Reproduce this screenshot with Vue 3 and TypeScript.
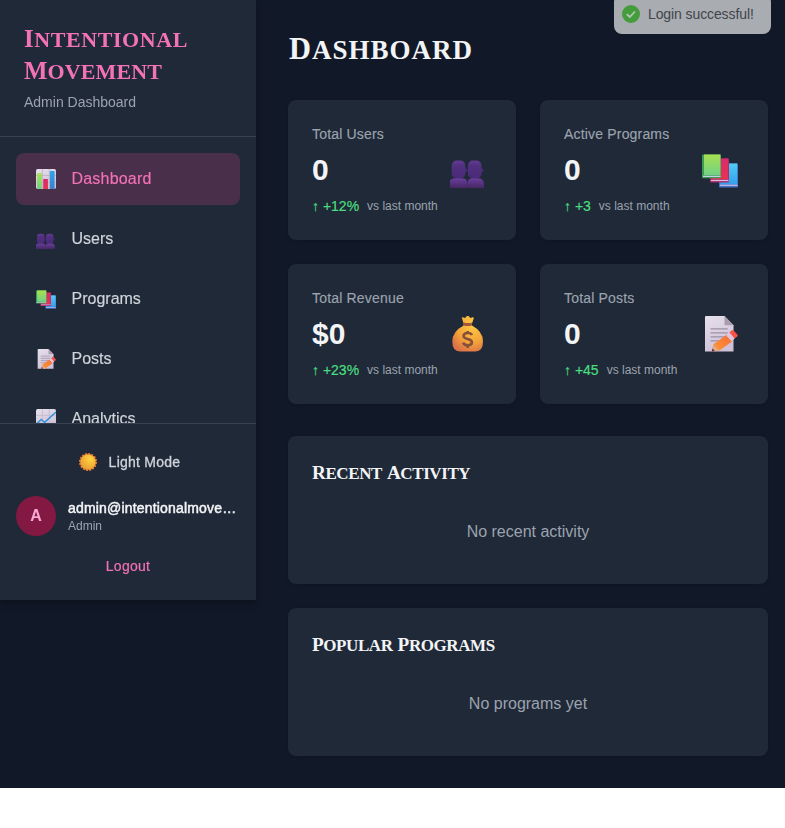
<script setup lang="ts">
interface NavItem { label: string; icon: string; active?: boolean }
interface Stat { label: string; value: string; change: string; icon: string }

const navItems: NavItem[] = [
  { label: 'Dashboard', icon: 'chart', active: true },
  { label: 'Users', icon: 'users' },
  { label: 'Programs', icon: 'books' },
  { label: 'Posts', icon: 'memo' },
  { label: 'Analytics', icon: 'trend' },
]

const stats: Stat[] = [
  { label: 'Total Users', value: '0', change: '↑ +12%', icon: 'users' },
  { label: 'Active Programs', value: '0', change: '↑ +3', icon: 'books' },
  { label: 'Total Revenue', value: '$0', change: '↑ +23%', icon: 'money' },
  { label: 'Total Posts', value: '0', change: '↑ +45', icon: 'memo' },
]

const panels = [
  { title: ['Recent', 'Activity'], empty: 'No recent activity' },
  { title: ['Popular', 'Programs'], empty: 'No programs yet' },
]
</script>

<template>
  <div class="layout">
    <svg class="sprite" width="0" height="0" aria-hidden="true">
      <defs>
        <linearGradient id="g-paper" x1="0" y1="0" x2="0.4" y2="1"><stop offset="0" stop-color="#e6e0ec" /><stop offset="1" stop-color="#cfc1d8" /></linearGradient>
        <linearGradient id="g-green" x1="0" y1="0" x2="0" y2="1"><stop offset="0" stop-color="#a8e050" /><stop offset="1" stop-color="#72d186" /></linearGradient>
        <linearGradient id="g-red" x1="0" y1="0" x2="0" y2="1"><stop offset="0" stop-color="#d92b6d" /><stop offset="1" stop-color="#ea3150" /></linearGradient>
        <linearGradient id="g-sky" x1="0" y1="0" x2="0" y2="1"><stop offset="0" stop-color="#50cdf4" /><stop offset="1" stop-color="#34a0ed" /></linearGradient>
        <linearGradient id="g-blue" x1="0" y1="0" x2="0" y2="1"><stop offset="0" stop-color="#2da4ec" /><stop offset="1" stop-color="#3f7ed0" /></linearGradient>
        <linearGradient id="g-head" x1="0" y1="0" x2="0" y2="1"><stop offset="0" stop-color="#633b91" /><stop offset="0.3" stop-color="#51307f" /><stop offset="1" stop-color="#4a2a78" /></linearGradient>
        <linearGradient id="g-body" x1="0" y1="0" x2="0" y2="1"><stop offset="0" stop-color="#693e9c" /><stop offset="1" stop-color="#452765" /></linearGradient>
        <radialGradient id="g-bag" cx="0.65" cy="0.25" r="0.8"><stop offset="0" stop-color="#ffca45" /><stop offset="0.6" stop-color="#f5a53a" /><stop offset="1" stop-color="#dc7347" /></radialGradient>
        <linearGradient id="g-pencil" x1="0" y1="1" x2="1" y2="0"><stop offset="0" stop-color="#ff9b36" /><stop offset="1" stop-color="#f56d38" /></linearGradient>
        <radialGradient id="g-sun" cx="0.65" cy="0.3" r="0.75"><stop offset="0" stop-color="#ffd43c" /><stop offset="1" stop-color="#e99b36" /></radialGradient>
      </defs>
      <symbol id="chart" viewBox="0 0 36 36">
        <rect width="36" height="36" rx="3" fill="url(#g-paper)" />
        <path d="M0 11.5H36M0 24H36M11.5 0V36M24 0V36" stroke="#b9afc1" stroke-width="1.4" />
        <rect x="2" y="7.5" width="8.5" height="28.5" rx="1" fill="url(#g-green)" />
        <rect x="13" y="18" width="8.5" height="18" rx="1" fill="url(#g-red)" />
        <rect x="25" y="3.8" width="8.5" height="32.2" rx="1" fill="url(#g-blue)" />
      </symbol>
      <symbol id="users" viewBox="0 0 36 36" overflow="visible">
        <circle cx="15.6" cy="18.3" r="1.5" fill="#3f246c" stroke="#58348a" stroke-width=".7" />
        <circle cx="31.6" cy="18.3" r="1.5" fill="#3f246c" stroke="#58348a" stroke-width=".7" />
        <rect x="1.7" y="8.5" width="13.6" height="18" rx="5" fill="url(#g-head)" />
        <rect x="17.9" y="8.5" width="13.6" height="18" rx="5" fill="url(#g-head)" />
        <path d="M-1.2 36V31.5Q-.5 26.3 5 26.3H12Q17.3 26.3 17.8 31.5V36Z" fill="url(#g-body)" />
        <path d="M18 36V28.5Q19.5 26.3 22 26.3H28Q33.5 26.3 34 31.5V36Z" fill="url(#g-body)" />
      </symbol>
      <symbol id="books" viewBox="0 0 36 36">
        <rect x="17" y="11.5" width="19" height="24" rx="1" fill="#4273c9" />
        <rect x="18.5" y="11.5" width="16.7" height="20.5" fill="url(#g-sky)" />
        <rect x="18" y="32.6" width="17.5" height="1.3" fill="#c3c0ea" />
        <rect x="8" y="6.5" width="19" height="24" rx="1" fill="#a82b68" />
        <rect x="10" y="6.5" width="16.2" height="20.5" fill="url(#g-red)" />
        <rect x="9" y="27.8" width="17.5" height="1.3" fill="#dfb6dc" />
        <rect x="0" y="2.5" width="19" height="23.7" rx="1" fill="#3c9b54" />
        <rect x="2" y="2.5" width="16.4" height="20.5" fill="url(#g-green)" />
        <rect x="1" y="23.7" width="17.5" height="1.3" fill="#c3d0df" />
      </symbol>
      <symbol id="money" viewBox="0 0 36 36" overflow="visible">
        <path d="M12 2.6Q11.2 1 13 1.2L15 2 17-.1Q17.8-.5 18.6.1L20.4 2 22.5 1.2Q24.4 1 23.6 2.8L22 7.5V9.5Q33 15.5 33 25.3 33 35.5 25.5 35.5H10Q2.3 35.5 2.3 25.3 2.3 15.5 13.6 9.5V7.5Z" fill="url(#g-bag)" />
        <path d="M13.8 6.4Q17.8 7.4 21.8 6.4L22 9.4Q17.8 10.5 13.6 9.4Z" fill="#a4563b" />
        <path d="M21.9 19.2C20.9 16.2 13.6 16.2 13.6 20 13.6 24 21.9 22 21.9 26.2 21.9 30.4 14 30 13.2 26.6M17.7 15V18M17.7 29V32" fill="none" stroke="#87503b" stroke-width="2.6" />
      </symbol>
      <symbol id="memo" viewBox="0 0 36 36" overflow="visible">
        <path d="M4 0H22.5L31.5 9.3V35.5H3V1Q3 0 4 0Z" fill="url(#g-paper)" />
        <path d="M22.5 0V8Q22.5 9.3 24 9.3H31.5Z" fill="#a99caf" />
        <path d="M8.5 12.8H25.7M8.5 16.8H25.7M8.5 20.8H23M8.5 24.8H18" stroke="#9c91a4" stroke-width="1.2" />
        <path d="M24.5 18.8 30.3 25.2 17.5 34.5 9.6 35.8 11.5 28.3Z" fill="url(#g-pencil)" />
        <path d="M11.5 28.8 17.5 34.5 9.6 35.8Z" fill="#dcab8a" />
        <path d="M10.5 32.5 13 35.2 9.6 35.8Z" fill="#572b51" />
        <path d="M24.2 19.4 27.8 16.2 32.8 22.4 29.5 25.2Z" fill="#dfc6df" />
        <path d="M27.4 16.6 29.5 14.5Q30.5 13.7 31.5 14.5L35.3 18.6Q36.1 19.6 35.2 20.4L32.6 22.6Z" fill="#fa5449" />
      </symbol>
      <symbol id="trend" viewBox="0 0 36 36">
        <rect width="36" height="36" rx="3" fill="url(#g-paper)" />
        <path d="M0 11.5H36M0 24H36M11.5 0V36M24 0V36" stroke="#c3bacb" stroke-width="1.4" />
        <path d="M1 27 9.5 19 15.5 24 36 5.5" fill="none" stroke="#2d91d9" stroke-width="2.6" />
      </symbol>
      <symbol id="sun" viewBox="0 0 36 36">
        <circle cx="18" cy="18" r="14.6" fill="none" stroke="#e87831" stroke-width="3.4" stroke-dasharray="3.4 2.333" />
        <circle cx="18" cy="18" r="14" fill="url(#g-sun)" stroke="#e98a33" stroke-width="1" />
      </symbol>
    </svg>

    <aside class="sidebar">
      <header class="brand">
        <h1 class="brand-title caps"><span>Intentional</span> <span class="second">Movement</span></h1>
        <p class="brand-sub">Admin Dashboard</p>
      </header>
      <nav class="nav">
        <a v-for="item in navItems" :key="item.label" class="nav-item" :class="{ active: item.active }">
          <svg class="nav-icon"><use :href="'#' + item.icon" /></svg>
          <span>{{ item.label }}</span>
        </a>
      </nav>
      <footer class="account">
        <button class="theme">
          <svg class="nav-icon"><use href="#sun" /></svg>
          <span>Light Mode</span>
        </button>
        <div class="user">
          <div class="avatar">A</div>
          <div class="user-text">
            <p class="email">admin@intentionalmovement.com</p>
            <p class="role">Admin</p>
          </div>
        </div>
        <button class="logout">Logout</button>
      </footer>
    </aside>

    <main class="main">
      <h1 class="page-title caps"><span>Dashboard</span></h1>
      <section class="stats">
        <article v-for="s in stats" :key="s.label" class="card stat">
          <div>
            <p class="label">{{ s.label }}</p>
            <p class="value">{{ s.value }}</p>
            <p class="change"><span class="up">{{ s.change }}</span><span class="vs">vs last month</span></p>
          </div>
          <svg class="stat-icon"><use :href="'#' + s.icon" /></svg>
        </article>
      </section>
      <section class="panels">
        <article v-for="p in panels" :key="p.empty" class="card">
          <h2 class="panel-title caps"><span v-for="w in p.title" :key="w">{{ w }}</span></h2>
          <p class="empty">{{ p.empty }}</p>
        </article>
      </section>
    </main>

    <div class="toast">
      <svg width="18" height="18" viewBox="0 0 18 18"><circle cx="9" cy="9" r="9" fill="#459c3b" /><path d="M4.8 9.2 7.8 12 13 6.5" fill="none" stroke="#b5c5b5" stroke-width="1.8" /></svg>
      <span>Login successful!</span>
    </div>
  </div>
</template>

<style>
body { background: #fff; }
</style>

<style scoped>
* { box-sizing: border-box; }
h1, h2, p { margin: 0; }
button { border: 0; background: none; padding: 0; font: inherit; color: inherit; }
.layout { position: relative; height: 788px; background: #111827; color: #f3f4f6; font-family: "Liberation Sans", Arial, sans-serif; }
.sprite { position: absolute; }

.caps { font-family: "Liberation Serif", serif; font-weight: 700; text-transform: uppercase; }
.caps span { display: inline-block; }
.caps span::first-letter { font-size: 1.13em; }

.sidebar { position: absolute; top: 0; left: 0; width: 256px; height: 600px; display: flex; flex-direction: column; background: #1f2937; box-shadow: 0 4px 8px rgba(0, 0, 0, .25); will-change: transform; }
.brand { height: 137px; padding: 24px; border-bottom: 1px solid #374151; flex: none; }
.brand-title { font-size: 22px; line-height: 30px; height: 64px; color: #f472b6; letter-spacing: .58px; }
.brand-title span { display: block; height: 32px; }
.brand-title .second { letter-spacing: .1px; }
.brand-sub { margin-top: 4px; font-size: 14px; line-height: 20px; color: #9ca3af; }
.nav { flex: 1; min-height: 0; overflow: hidden; padding: 16px; }
.nav-item { display: flex; align-items: center; height: 52px; margin-bottom: 8px; padding: 0 20px; gap: 15.5px; border-radius: 8px; font-size: 16px; color: #d1d5db; -webkit-text-stroke: .15px; }
.nav-item.active { background: #4a2f4b; color: #f472b6; letter-spacing: .2px; }
.nav-icon { width: 20px; height: 20px; flex: none; }
.account { flex: none; height: 177px; padding: 16px; border-top: 1px solid #374151; font-size: 14px; }
.theme { display: flex; width: 100%; height: 44px; padding-left: 2px; align-items: center; justify-content: center; gap: 11px; color: #d1d5db; letter-spacing: .25px; -webkit-text-stroke: .3px; }
.user { display: flex; align-items: center; gap: 12px; margin-top: 12px; }
.avatar { width: 40px; height: 40px; border-radius: 50%; background: #831843; color: #f9a8d4; display: grid; place-items: center; font-size: 16px; font-weight: 700; }
.user-text { flex: 1; min-width: 0; margin-right: -2px; }
.email { overflow: hidden; text-overflow: ellipsis; white-space: nowrap; font-size: 14px; line-height: 20px; letter-spacing: .18px; -webkit-text-stroke: .5px; }
.role { font-size: 12px; line-height: 16px; color: #9ca3af; }
.logout { display: block; width: 100%; height: 36px; margin-top: 12px; color: #f472b6; letter-spacing: .25px; -webkit-text-stroke: .2px; }

.main { padding: 32px 17px 0 32px; margin-left: 256px; }
.page-title { padding-left: 1px; font-size: 27px; line-height: 34px; height: 36px; letter-spacing: 1px; }
.card { background: #1f2937; border-radius: 8px; padding: 24px; box-shadow: 0 1px 3px rgba(0, 0, 0, .12); }
.stats { margin-top: 32px; display: grid; grid-template-columns: 1fr 1fr; gap: 24px; }
.stat { display: flex; align-items: center; justify-content: space-between; height: 140px; padding-right: 30px; }
.stat-icon { width: 36px; height: 36px; }
.label { font-size: 14px; line-height: 20px; color: #9ca3af; letter-spacing: .18px; -webkit-text-stroke: .15px; }
.value { margin-top: 8px; font-size: 30px; line-height: 36px; font-weight: 700; }
.change { margin-top: 8px; display: flex; align-items: center; gap: 8px; line-height: 20px; white-space: nowrap; }
.up { font-size: 14px; color: #4ade80; -webkit-text-stroke: .2px; }
.vs { font-size: 12px; color: #9ca3af; }
.panels { margin-top: 32px; display: grid; gap: 24px; }
.panels .card { height: 148px; }
.panel-title { display: flex; gap: 5px; font-size: 17px; line-height: 26px; height: 28px; letter-spacing: -.42px; }
.empty { margin-top: 32px; text-align: center; font-size: 16px; line-height: 24px; color: #9ca3af; }

.toast { position: absolute; top: -6px; left: 614px; width: 157px; height: 40px; padding-left: 8px; display: flex; align-items: center; gap: 8px; border-radius: 8px; background: #a9acb1; color: #41444b; font-size: 14px; letter-spacing: -.1px; white-space: nowrap; }
</style>
